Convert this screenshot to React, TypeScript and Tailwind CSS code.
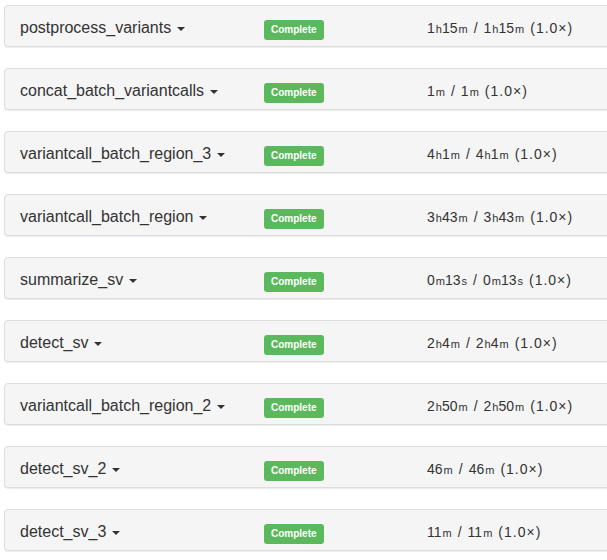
const rows: { name: string; time: [string, string][] }[] = [
  { name: 'postprocess_variants', time: [['1', 'h'], ['15', 'm']] },
  { name: 'concat_batch_variantcalls', time: [['1', 'm']] },
  { name: 'variantcall_batch_region_3', time: [['4', 'h'], ['1', 'm']] },
  { name: 'variantcall_batch_region', time: [['3', 'h'], ['43', 'm']] },
  { name: 'summarize_sv', time: [['0', 'm'], ['13', 's']] },
  { name: 'detect_sv', time: [['2', 'h'], ['4', 'm']] },
  { name: 'variantcall_batch_region_2', time: [['2', 'h'], ['50', 'm']] },
  { name: 'detect_sv_2', time: [['46', 'm']] },
  { name: 'detect_sv_3', time: [['11', 'm']] },
];

function Duration({ parts }: { parts: [string, string][] }) {
  return (
    <span>
      {parts.map(([n, u], i) => (
        <span key={i}>
          {n}
          <span className="ml-[1px] text-[11px]">{u}</span>
        </span>
      ))}
    </span>
  );
}

function TaskPanel({ name, time }: { name: string; time: [string, string][] }) {
  return (
    <div className="mb-[21px] w-[640px] rounded-[4px] border border-[#ddd] bg-[#f5f5f5] shadow-[0_1px_1px_rgba(0,0,0,0.08)]">
      <div className="flex h-[40px] items-center px-[15px] pt-[4px]">
        <div className="flex w-[244px] items-center text-[16px] leading-[20px] text-[#333]">
          <span>{name}</span>
          <span className="ml-[6px] mt-[1px] h-0 w-0 border-x-[4px] border-t-[4px] border-x-transparent border-t-[#333]" />
        </div>
        <div className="w-[163px]">
          <span className="inline-flex h-[20px] items-center rounded-[3px] bg-[#5cb85c] px-[7px] text-[10px] font-bold text-white">
            Complete
          </span>
        </div>
        <div className="text-[14px] leading-[20px] text-[#333]">
          <Duration parts={time} />
          <span className="mx-[6px]">/</span>
          <Duration parts={time} />
          <span className="ml-[6px] tracking-[1px]">(1.0×)</span>
        </div>
      </div>
    </div>
  );
}

export default function App() {
  return (
    <div
      className="h-[560px] w-[607px] overflow-hidden bg-white pl-[4px] pt-[5px]"
      style={{ fontFamily: '"Liberation Sans", Arial, sans-serif' }}
    >
      {rows.map((r) => (
        <TaskPanel key={r.name} name={r.name} time={r.time} />
      ))}
    </div>
  );
}
